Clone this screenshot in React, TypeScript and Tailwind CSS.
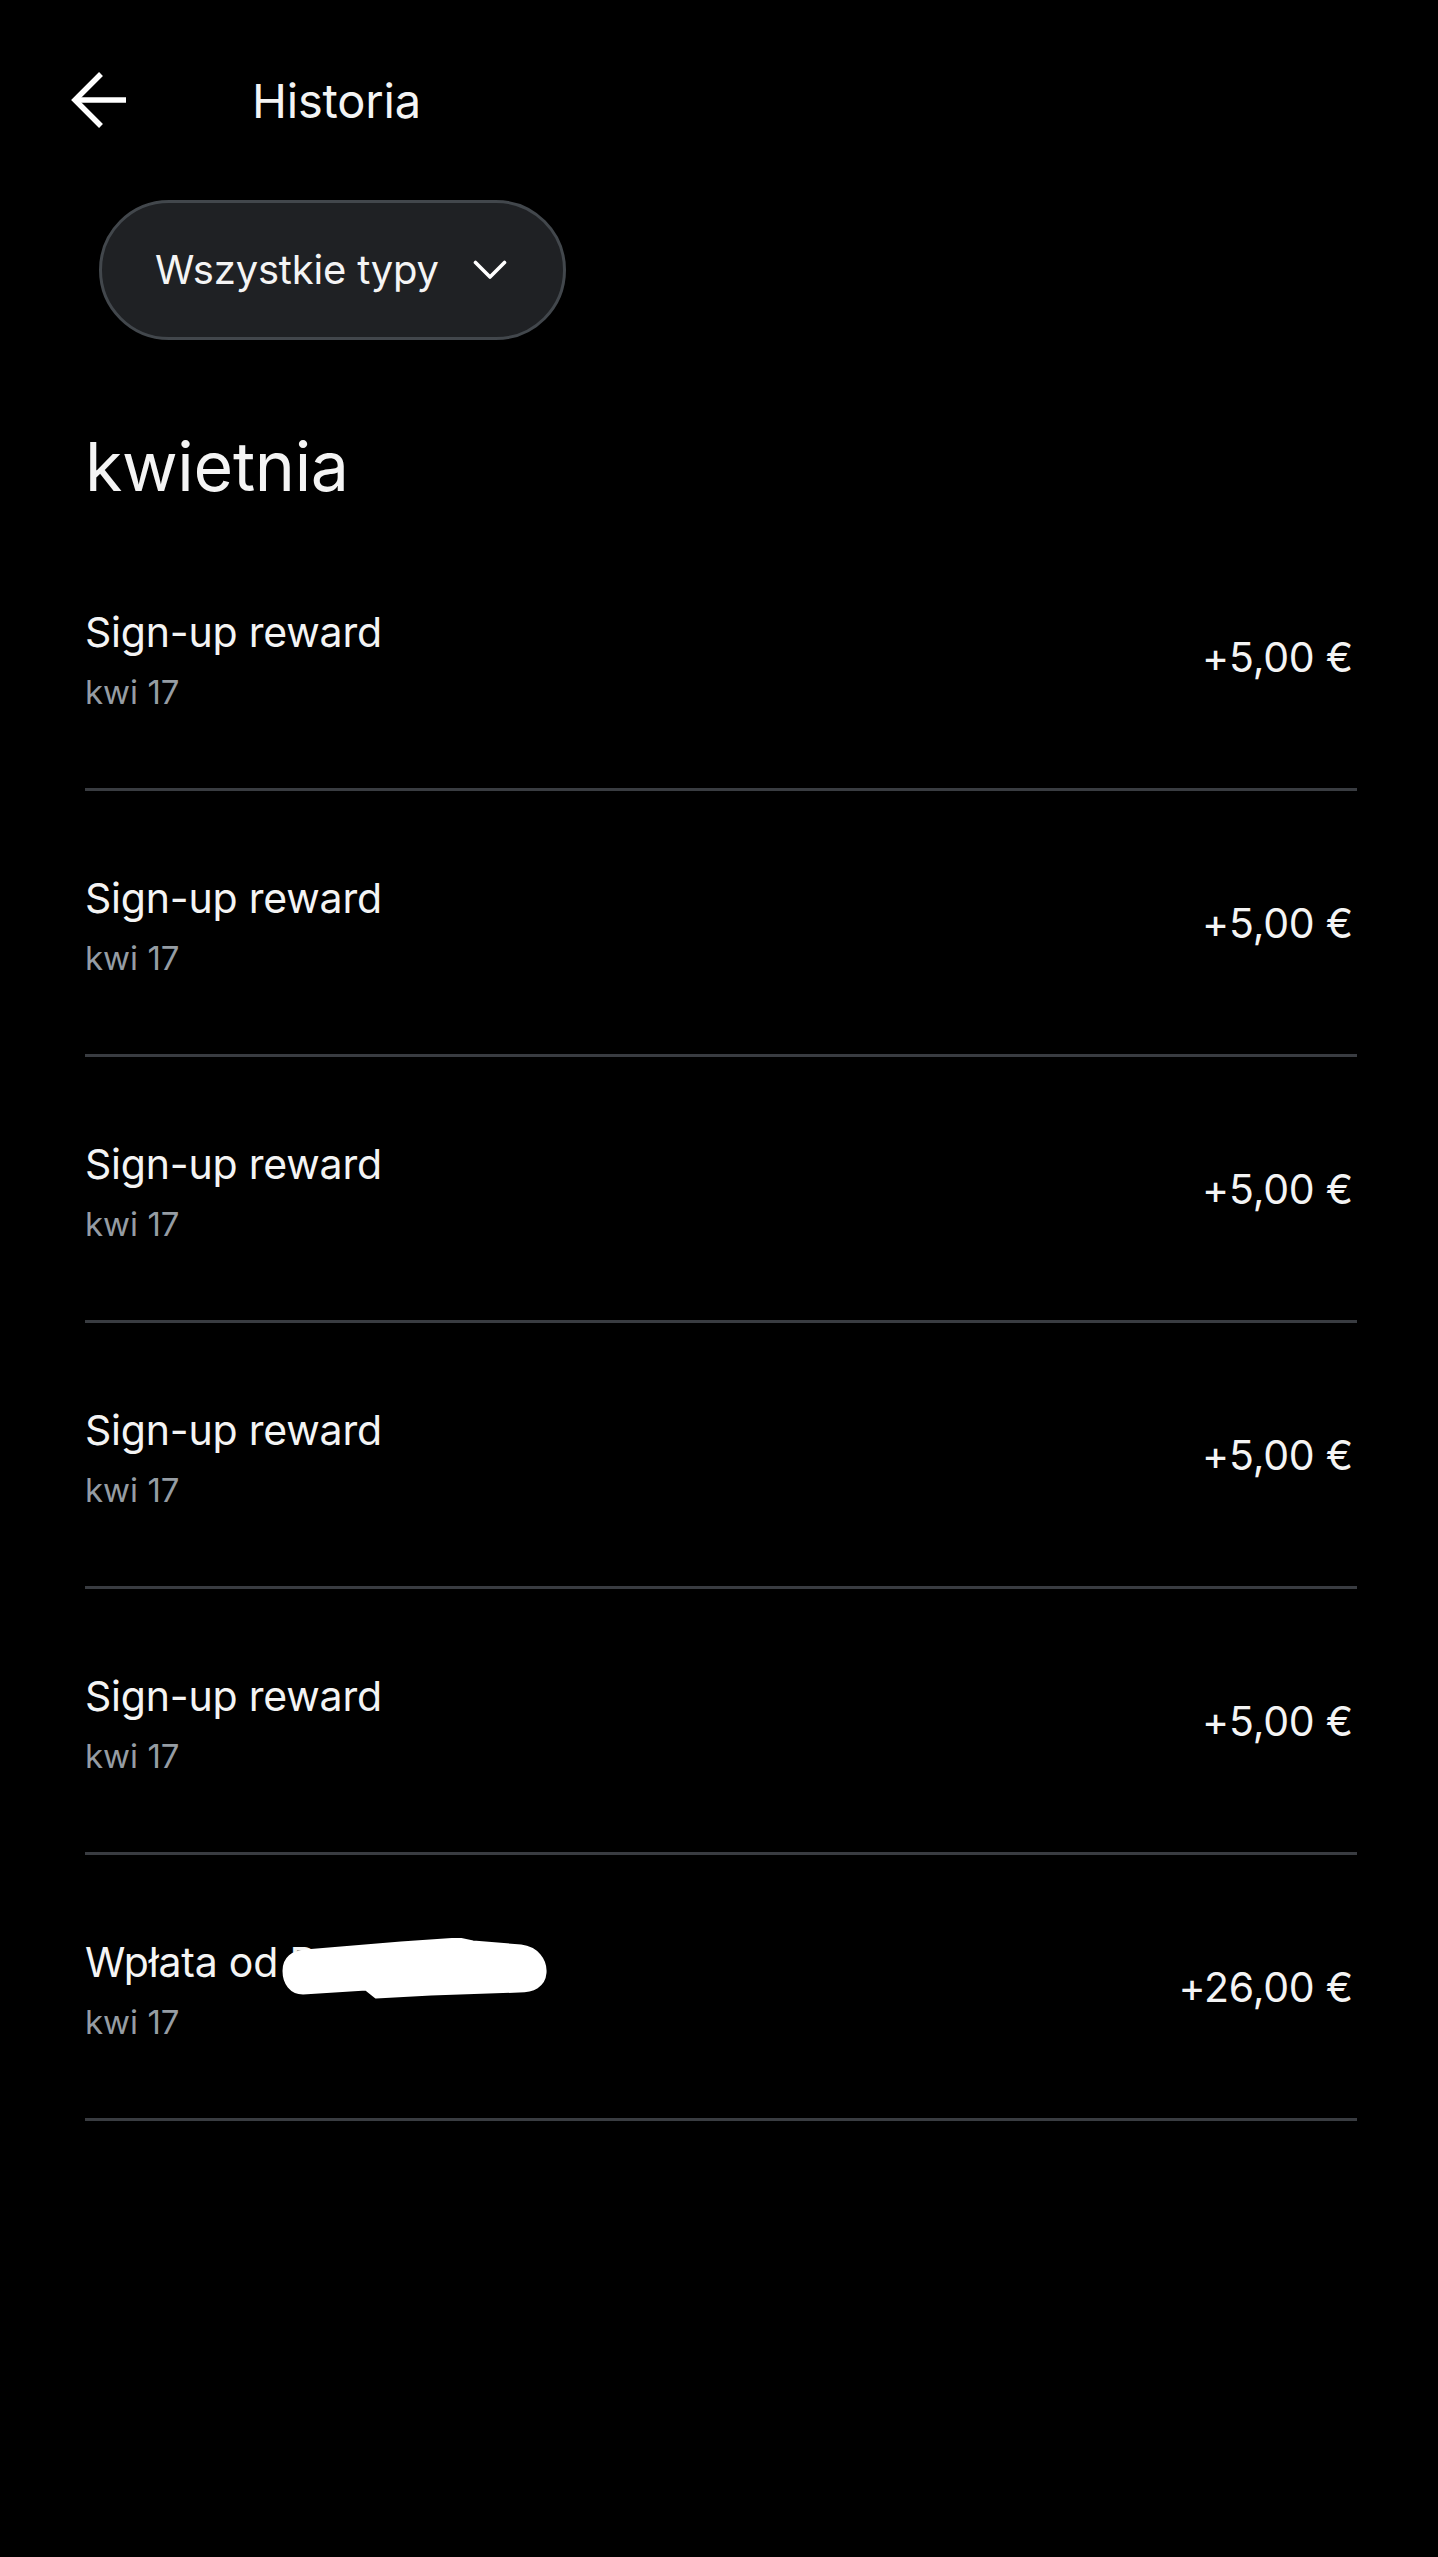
import React from "react";

type Item = { title: string; date: string; amount: string; redacted?: boolean };

const items: Item[] = [
  { title: "Sign-up reward", date: "kwi 17", amount: "+5,00 €" },
  { title: "Sign-up reward", date: "kwi 17", amount: "+5,00 €" },
  { title: "Sign-up reward", date: "kwi 17", amount: "+5,00 €" },
  { title: "Sign-up reward", date: "kwi 17", amount: "+5,00 €" },
  { title: "Sign-up reward", date: "kwi 17", amount: "+5,00 €" },
  { title: "Wpłata od D", date: "kwi 17", amount: "+26,00 €", redacted: true },
];

function BackArrow() {
  return (
    <svg width="56" height="56" viewBox="0 0 56 56" fill="none">
      <path d="M56 28H5" stroke="#ffffff" strokeWidth="5.5" />
      <path d="M31 2L5 28L31 54" stroke="#ffffff" strokeWidth="5.5" strokeLinejoin="miter" />
    </svg>
  );
}

function Chevron() {
  return (
    <svg width="34" height="21" viewBox="0 0 34 21" fill="none">
      <path d="M2.5 2.5L17 17L31.5 2.5" stroke="#ffffff" strokeWidth="3.6" strokeLinecap="round" strokeLinejoin="round" />
    </svg>
  );
}

function Blob() {
  return (
    <svg width="266" height="62" viewBox="0 0 266 62" className="absolute left-[196px] top-[0px]">
      <path
        d="M3 33 C3 20, 12 14, 24 13 L120 5 L178 1 L192 4 L240 8 C256 10, 265 22, 264 35 C263 48, 252 53, 238 53 L150 56 L95 59 L85 51 L22 55 C10 55, 3 45, 3 33 Z"
        fill="#ffffff"
        stroke="#ffffff"
        strokeWidth="3"
        strokeLinejoin="round"
      />
    </svg>
  );
}

export default function App() {
  return (
    <div className="min-h-[2557px] w-full bg-black font-['Inter',sans-serif] text-[#f4f4f4]">
      <header className="flex h-[200px] items-center">
        <div className="ml-[70px] flex h-[56px] w-[56px] items-center">
          <BackArrow />
        </div>
        <h1 className="ml-[126px] text-[47px] font-normal leading-none tracking-[-0.2px]">Historia</h1>
      </header>

      <div className="ml-[99px]">
        <button className="flex h-[140px] w-[467px] items-center rounded-full border-[3px] border-[#42474c] bg-[#1f2124] pl-[53px]">
          <span className="text-[40px] leading-none tracking-[-0.2px] text-[#f4f4f4]">Wszystkie typy</span>
          <span className="ml-[34px] flex items-center">
            <Chevron />
          </span>
        </button>
      </div>

      <h2 className="ml-[85px] mt-[92px] text-[68px] font-normal leading-[68px] tracking-[-0.3px]">kwietnia</h2>

      <div className="ml-[85px] mr-[81px] mt-[25px]">
        {items.map((it, i) => (
          <div key={i} className="flex h-[266px] items-center justify-between border-b-[3px] border-[#393c41]">
            <div className="flex flex-col pt-[6px]">
              <div className="relative text-[41px] leading-[48px] tracking-[-0.2px]">
                {it.title}
                {it.redacted && <Blob />}
              </div>
              <div className="mt-[16px] text-[33px] leading-[40px] text-[#959ca3]">{it.date}</div>
            </div>
            <div className="mr-[4px] text-[41px] leading-[48px] tracking-[-0.2px]">{it.amount}</div>
          </div>
        ))}
      </div>
    </div>
  );
}
